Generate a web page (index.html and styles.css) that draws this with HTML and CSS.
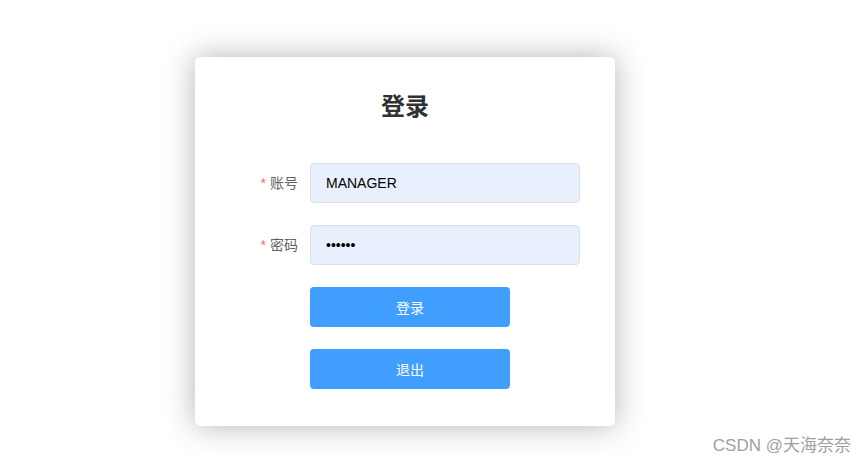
FILE: index.html
```html
<!DOCTYPE html>
<html lang="zh">
<head>
<meta charset="utf-8">
<title>登录</title>
<link rel="stylesheet" href="styles.css">
</head>
<body>
<div class="card">
  <h2 class="title">登录</h2>
  <form class="form">
    <div class="item">
      <label class="label"><span class="req">*</span>账号</label>
      <input class="input" type="text" value="MANAGER">
    </div>
    <div class="item">
      <label class="label"><span class="req">*</span>密码</label>
      <input class="input" type="password" value="123456">
    </div>
    <div class="item item-btn">
      <button type="button" class="btn">登录</button>
    </div>
    <div class="item item-btn">
      <button type="button" class="btn">退出</button>
    </div>
  </form>
</div>
<div class="watermark">CSDN @天海奈奈</div>
</body>
</html>
```
FILE: styles.css
```css
html, body {
  margin: 0;
  padding: 0;
  background: #fff;
  font-family: "Liberation Sans", "Noto Sans CJK SC", sans-serif;
}
body {
  width: 867px;
  height: 473px;
  position: relative;
  overflow: hidden;
  padding-top: 57px;
  box-sizing: border-box;
}
.card {
  width: 420px;
  box-sizing: border-box;
  margin-left: 195px;
  padding: 38px 35px 15px;
  background: #fff;
  border-radius: 5px;
  box-shadow: 0 0 30px rgba(50, 55, 70, 0.38);
}
.title {
  margin: 0 0 44px;
  text-align: center;
  font-size: 24px;
  line-height: 24px;
  font-weight: bold;
  color: #303133;
}
.form {
  margin: 0;
}
.item {
  display: flex;
  align-items: center;
  height: 40px;
  margin-bottom: 22px;
}
.item-btn {
  padding-left: 80px;
}
.label {
  width: 80px;
  box-sizing: border-box;
  padding-right: 12px;
  text-align: right;
  font-size: 14px;
  color: #606266;
  line-height: 40px;
}
.req {
  color: #f56c6c;
  margin-right: 4px;
}
.input {
  width: 270px;
  height: 40px;
  box-sizing: border-box;
  border: 1px solid #dcdfe6;
  border-radius: 4px;
  background: #e8f0fe;
  padding: 0 15px;
  font-family: "Liberation Sans", "Noto Sans CJK SC", sans-serif;
  font-size: 14px;
  color: #000;
  outline: none;
}
.btn {
  width: 200px;
  height: 40px;
  border: none;
  border-radius: 4px;
  background: #409eff;
  color: #fff;
  font-family: "Liberation Sans", "Noto Sans CJK SC", sans-serif;
  font-size: 14px;
  padding: 0;
}
.watermark {
  position: absolute;
  right: 16px;
  bottom: 17px;
  font-size: 17px;
  line-height: 20px;
  color: #a0a0a0;
}
```
